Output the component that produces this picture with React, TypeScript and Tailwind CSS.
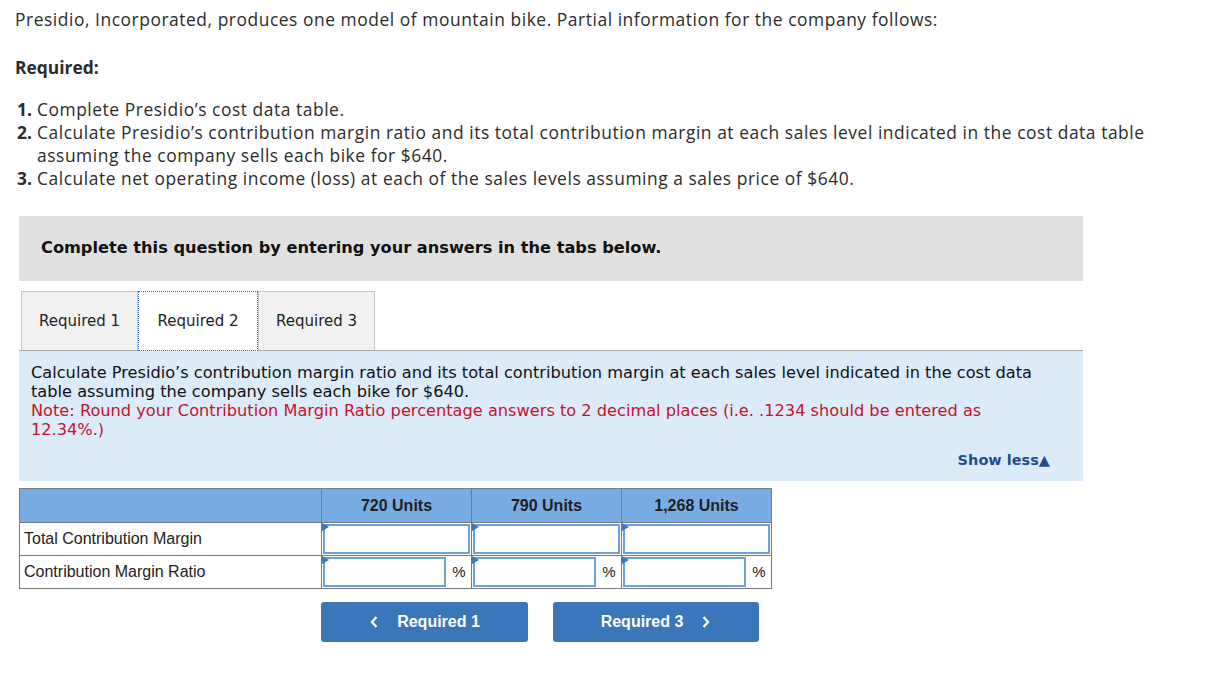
import React from "react";

const Flag: React.FC = () => (
  <span className="absolute left-0 top-0 w-0 h-0 border-t-[4px] border-b-[4px] border-l-[7px] border-t-transparent border-b-transparent border-l-[#3d79c2]" />
);

const AmountCell: React.FC = () => (
  <td className="border border-[#7a7a7a] p-0 h-[33px]">
    <div className="relative h-full p-px">
      <div className="h-[30px] border-2 border-[#6e9fd6] bg-white" />
      <Flag />
    </div>
  </td>
);

const PercentCell: React.FC = () => (
  <td className="border border-[#7a7a7a] p-0 h-[33px]">
    <div className="flex items-center h-full">
      <div className="relative flex-1 p-px">
        <div className="h-[30px] border-2 border-[#6e9fd6] bg-white" />
        <Flag />
      </div>
      <span className="w-[24px] text-center text-[15px] text-[#222]">%</span>
    </div>
  </td>
);

const App: React.FC = () => {
  const tabs = ["Required 1", "Required 2", "Required 3"];
  const units = ["720 Units", "790 Units", "1,268 Units"];

  return (
    <div className="min-h-screen bg-white text-[#222]">
      {/* question intro */}
      <div className="pl-[15px] pt-[8px] font-['Open_Sans',sans-serif] text-[17.4px] leading-[23px] tracking-[0.55px] text-[#2b2b2b]">
        <p>
          Presidio, Incorporated, produces one model of mountain bike. Partial
          information for the company follows:
        </p>
        <p className="mt-[25px] font-bold tracking-normal">Required:</p>
        <ol className="mt-[19px] pl-[2px]">
          <li className="flex">
            <span className="w-[20px] font-bold tracking-normal">1.</span>
            <span>Complete Presidio’s cost data table.</span>
          </li>
          <li className="flex">
            <span className="w-[20px] shrink-0 font-bold tracking-normal">2.</span>
            <span className="max-w-[1140px]">
              Calculate Presidio’s contribution margin ratio and its total
              contribution margin at each sales level indicated in the cost data
              table assuming the company sells each bike for $640.
            </span>
          </li>
          <li className="flex">
            <span className="w-[20px] font-bold tracking-normal">3.</span>
            <span>
              Calculate net operating income (loss) at each of the sales levels
              assuming a sales price of $640.
            </span>
          </li>
        </ol>
      </div>

      <div className="ml-[19px] w-[1064px] font-['DejaVu_Sans',Verdana,sans-serif]">
        {/* instruction banner */}
        <div className="mt-[26px] h-[65px] bg-[#e0e0e0] pl-[22px] flex items-center">
          <span className="text-[16.2px] font-bold text-[#111]">
            Complete this question by entering your answers in the tabs below.
          </span>
        </div>

        {/* tabs */}
        <div className="mt-[10px] flex pl-[2px] border-b border-[#a9a9a9]">
          {tabs.map((t, i) =>
            i === 1 ? (
              <div
                key={t}
                className="h-[60px] -mb-px w-[120px] flex items-center justify-center bg-white border border-dotted border-[#3d6fb0] text-[15px] text-[#222]"
              >
                {t}
              </div>
            ) : (
              <div
                key={t}
                className="h-[59px] w-[117px] flex items-center justify-center bg-[#f2f2f2] border border-b-0 border-[#c4c4c4] text-[15px] text-[#222]"
              >
                {t}
              </div>
            )
          )}
        </div>

        {/* tab body */}
        <div className="bg-[#dbebf9] pl-[12px] pr-[33px] pt-[12px] pb-[11px] text-[16.2px] leading-[19px]">
          <p className="text-[#111]">
            Calculate Presidio’s contribution margin ratio and its total
            contribution margin at each sales level indicated in the cost data
            table assuming the company sells each bike for $640.
          </p>
          <p className="text-[#c5132b] max-w-[975px]">
            Note: Round your Contribution Margin Ratio percentage answers to 2
            decimal places (i.e. .1234 should be entered as 12.34%.)
          </p>
          <div className="mt-[12px] flex justify-end">
            <span className="text-[14.5px] font-bold text-[#1e4f8c]">
              Show less▲
            </span>
          </div>
        </div>
      </div>

      {/* answer table */}
      <table className="ml-[19px] mt-[7px] border-collapse font-['Liberation_Sans',Arial,sans-serif] text-[16px] text-[#222]">
        <thead>
          <tr className="bg-[#79ace3]">
            <th className="w-[302px] h-[34px] border border-[#7a7a7a]" />
            {units.map((u) => (
              <th
                key={u}
                className="w-[150px] h-[34px] border border-[#7a7a7a] font-bold text-[16px] text-[#1f1f1f]"
              >
                {u}
              </th>
            ))}
          </tr>
        </thead>
        <tbody>
          <tr>
            <td className="border border-[#7a7a7a] px-[4px] h-[33px]">
              Total Contribution Margin
            </td>
            <AmountCell />
            <AmountCell />
            <AmountCell />
          </tr>
          <tr>
            <td className="border border-[#7a7a7a] px-[4px] h-[33px]">
              Contribution Margin Ratio
            </td>
            <PercentCell />
            <PercentCell />
            <PercentCell />
          </tr>
        </tbody>
      </table>

      {/* navigation */}
      <div className="ml-[321px] mt-[13px] flex gap-[25px] font-['Liberation_Sans',Arial,sans-serif]">
        <button className="w-[207px] h-[40px] rounded-[3px] bg-[#3a76b9] text-white text-[16px] font-bold flex items-center justify-center gap-[18px]">
          <svg width="10" height="14" viewBox="0 0 10 14">
            <path d="M7.5 2 L3 7 L7.5 12" stroke="white" strokeWidth="2.4" fill="none" />
          </svg>
          Required 1
        </button>
        <button className="w-[206px] h-[40px] rounded-[3px] bg-[#3a76b9] text-white text-[16px] font-bold flex items-center justify-center gap-[18px]">
          Required 3
          <svg width="10" height="14" viewBox="0 0 10 14">
            <path d="M2.5 2 L7 7 L2.5 12" stroke="white" strokeWidth="2.4" fill="none" />
          </svg>
        </button>
      </div>
    </div>
  );
};

export default App;
